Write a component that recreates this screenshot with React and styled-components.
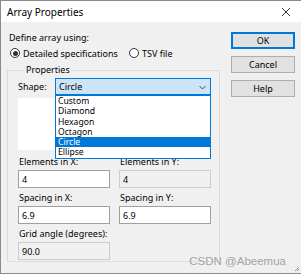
import React from 'react';
import styled, { createGlobalStyle } from 'styled-components';

const Global = createGlobalStyle`
  html, body { margin: 0; padding: 0; background: #f0f0f0; }
  body { font-family: "Noto Sans", "DejaVu Sans", sans-serif; font-size: 9px; color: #000; }
`;

const Window = styled.div`
  position: relative;
  width: 301px;
  height: 274px;
  box-sizing: border-box;
  border-left: 1px solid #8a8a8a;
  border-top: 1px solid #8a8a8a;
  border-bottom: 1px solid #8a8a8a;
  background: #f0f0f0;
  display: flex;
  flex-direction: column;
  overflow: hidden;
`;

const TitleBar = styled.div`
  height: 21px;
  background: #fff;
  display: flex;
  align-items: center;
  justify-content: space-between;
  padding: 0 10px 0 6px;
  font-size: 10px;
`;

const Body = styled.div`
  flex: 1;
  display: flex;
  padding: 9px 0 0 6px;
  gap: 11px;
`;

const Left = styled.div`
  width: 213px;
  display: flex;
  flex-direction: column;
`;

const Line = styled.div`
  height: 14px;
  line-height: 14px;
  padding-left: 2px;
`;

const RadioRow = styled.div`
  display: flex;
  align-items: center;
  height: 14px;
  margin-top: 1px;
  padding-left: 3px;
`;

const Radio = styled.label`
  display: flex;
  align-items: center;
  gap: 3px;
  width: ${({ w }) => w}px;
`;

const Dot = styled.span`
  width: 10px;
  height: 10px;
  border-radius: 50%;
  border: 1px solid #333;
  box-sizing: border-box;
  display: flex;
  align-items: center;
  justify-content: center;
  background: #fff;
  &::after {
    content: '';
    width: 5px;
    height: 5px;
    border-radius: 50%;
    background: ${({ on }) => (on ? '#333' : 'transparent')};
  }
`;

const Group = styled.fieldset`
  position: relative;
  margin: 4px 0 0 0;
  padding: 2px 6px 7px 10px;
  border: 1px solid #dcdcdc;
  height: 198px;
  box-sizing: border-box;
`;

const Legend = styled.legend`
  padding: 0 2px;
  margin-left: 6px;
  line-height: 12px;
`;

const ShapeRow = styled.div`
  display: flex;
  align-items: center;
  height: 17px;
`;

const ShapeLabel = styled.span`
  width: 37px;
`;

const Select = styled.div`
  position: relative;
  width: 156px;
  height: 17px;
  box-sizing: border-box;
  border: 1px solid #0078d7;
  background: #cce4f7;
  display: flex;
  align-items: center;
  padding-left: 3px;
`;

const Chevron = styled.svg`
  position: absolute;
  right: 4px;
  top: 6px;
`;

const List = styled.ul`
  position: absolute;
  left: -1px;
  top: 16px;
  width: 156px;
  margin: 0;
  padding: 0;
  list-style: none;
  box-sizing: border-box;
  border: 1px solid #0078d7;
  background: #fff;
  z-index: 2;
`;

const Item = styled.li`
  height: 10.3px;
  line-height: 10.3px;
  font-size: 8.6px;
  padding-left: 2px;
  overflow: hidden;
  background: ${({ sel }) => (sel ? '#0078d7' : '#fff')};
  color: ${({ sel }) => (sel ? '#fff' : '#000')};
`;

const Preview = styled.div`
  margin-top: 3px;
  width: 193px;
  height: 52px;
  background: #fff;
`;

const Fields = styled.div`
  margin-top: 4px;
  display: grid;
  grid-template-columns: 92px 92px;
  column-gap: 9px;
  row-gap: 2px;
`;

const Field = styled.div`
  display: flex;
  flex-direction: column;
`;

const FieldLabel = styled.span`
  height: 16px;
  line-height: 16px;
  padding-left: 1px;
`;

const Input = styled.div`
  height: 18px;
  box-sizing: border-box;
  border: 1px solid ${({ disabled }) => (disabled ? '#cccccc' : '#a0a0a0')};
  background: ${({ disabled }) => (disabled ? '#f0f0f0' : '#fff')};
  display: flex;
  align-items: center;
  padding-left: 3px;
`;

const Buttons = styled.div`
  display: flex;
  flex-direction: column;
  gap: 7px;
  width: 64px;
  padding-top: 1px;
`;

const Button = styled.button`
  height: 17px;
  box-sizing: border-box;
  margin: 0;
  padding: 0;
  font: inherit;
  color: #000;
  background: #e1e1e1;
  border: 1px solid ${({ primary }) => (primary ? '#0078d7' : '#adadad')};
  box-shadow: ${({ primary }) => (primary ? 'inset 0 0 0 1px #0078d7' : 'none')};
`;

const Watermark = styled.div`
  position: absolute;
  right: 15px;
  bottom: 6px;
  font-family: "Liberation Sans", Arial, sans-serif;
  font-size: 11.5px;
  color: #a3a3a3;
`;

const Grip = styled.svg`
  position: absolute;
  right: 1px;
  bottom: 1px;
`;

const shapes = ['Custom', 'Diamond', 'Hexagon', 'Octagon', 'Circle', 'Ellipse'];

export default function App() {
  return (
    <Window>
      <Global />
      <TitleBar>
        <span>Array Properties</span>
        <svg width="10" height="10" viewBox="0 0 10 10">
          <path d="M1 1 L9 9 M9 1 L1 9" stroke="#333" strokeWidth="1" />
        </svg>
      </TitleBar>
      <Body>
        <Left>
          <Line>Define array using:</Line>
          <RadioRow>
            <Radio w={119}>
              <Dot on />
              Detailed specifications
            </Radio>
            <Radio w={80}>
              <Dot />
              TSV file
            </Radio>
          </RadioRow>
          <Group>
            <Legend>Properties</Legend>
            <ShapeRow>
              <ShapeLabel>Shape:</ShapeLabel>
              <Select>
                Circle
                <Chevron width="7" height="5" viewBox="0 0 7 5">
                  <path d="M0.5 1 L3.5 4 L6.5 1" fill="none" stroke="#444" strokeWidth="1" />
                </Chevron>
                <List>
                  {shapes.map((s) => (
                    <Item key={s} sel={s === 'Circle'}>{s}</Item>
                  ))}
                </List>
              </Select>
            </ShapeRow>
            <Preview />
            <Fields>
              <Field>
                <FieldLabel>Elements in X:</FieldLabel>
                <Input>4</Input>
              </Field>
              <Field>
                <FieldLabel>Elements in Y:</FieldLabel>
                <Input disabled>4</Input>
              </Field>
              <Field>
                <FieldLabel>Spacing in X:</FieldLabel>
                <Input>6.9</Input>
              </Field>
              <Field>
                <FieldLabel>Spacing in Y:</FieldLabel>
                <Input>6.9</Input>
              </Field>
              <Field>
                <FieldLabel>Grid angle (degrees):</FieldLabel>
                <Input disabled>90.0</Input>
              </Field>
            </Fields>
          </Group>
        </Left>
        <Buttons>
          <Button primary>OK</Button>
          <Button>Cancel</Button>
          <Button>Help</Button>
        </Buttons>
      </Body>
      <Watermark>CSDN @Abeemua</Watermark>
      <Grip width="6" height="6" viewBox="0 0 6 6">
        <path d="M5 1 L1 5 M5 3 L3 5" stroke="#999" strokeWidth="1" />
      </Grip>
    </Window>
  );
}
